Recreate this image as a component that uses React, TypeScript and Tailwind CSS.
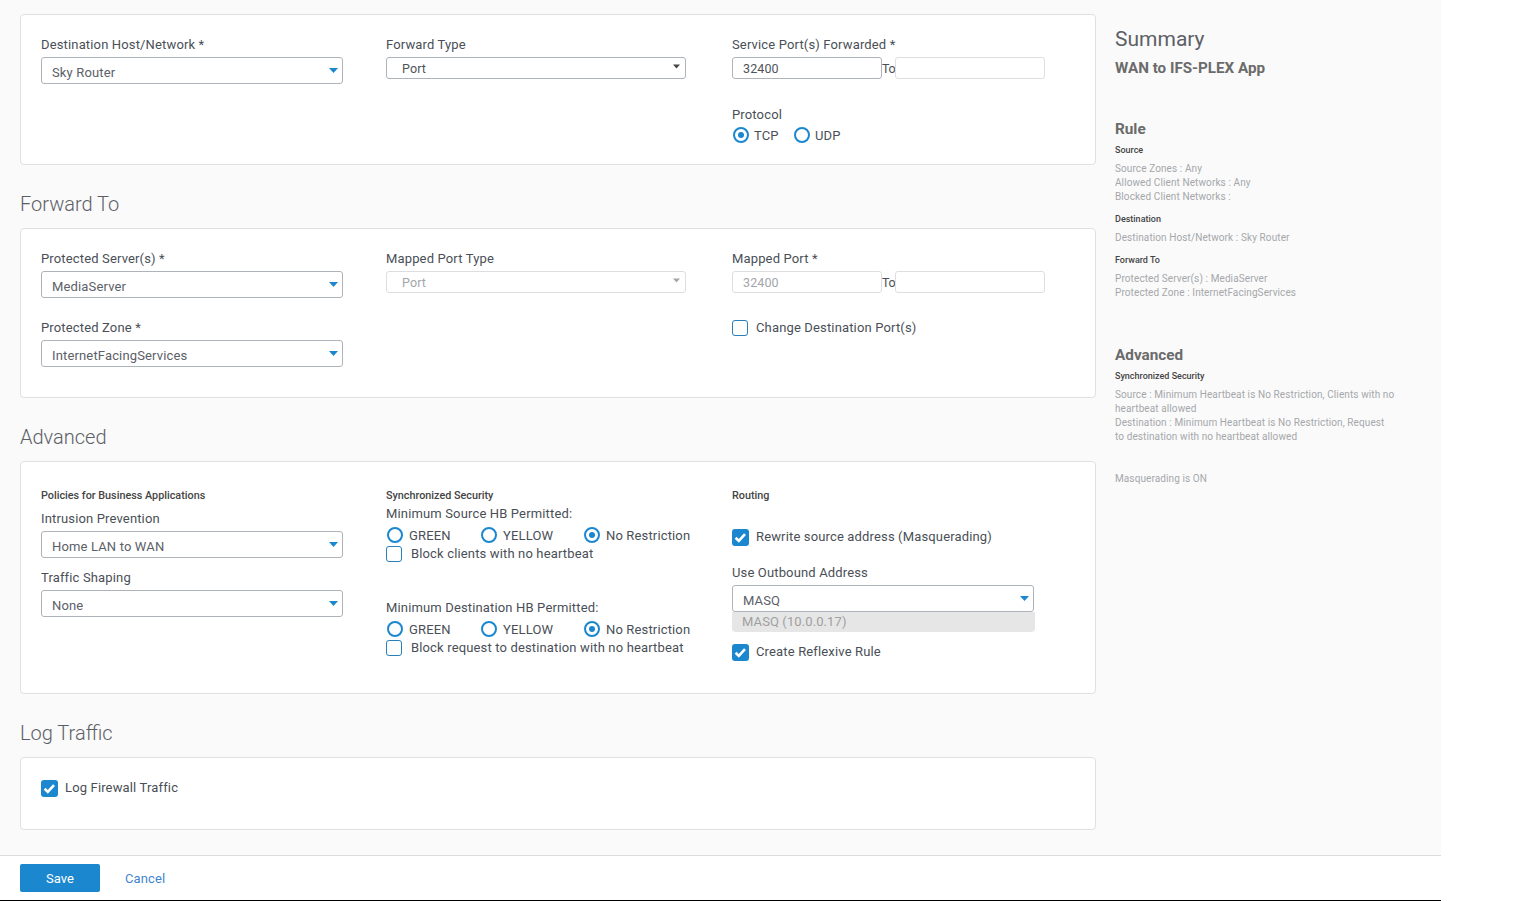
import type { ReactNode } from "react";

const font = "font-['Roboto','Noto_Sans',sans-serif]";
const cols = "grid grid-cols-[345px_346px_1fr]";

function Label({ children, className = "" }: { children: ReactNode; className?: string }) {
  return <div className={`h-[18px] leading-[20px] text-[13px] tracking-[0.15px] text-[#4a4f57] whitespace-nowrap ${className}`}>{children}</div>;
}

function Caret({ color = "#1a87cf", size = 9 }: { color?: string; size?: number }) {
  return (
    <svg width={size} height={5} viewBox="0 0 9 5" className="block">
      <path d="M0 0h9L4.5 5z" fill={color} />
    </svg>
  );
}

function BlueSelect({ value, className = "w-[302px]" }: { value: string; className?: string }) {
  return (
    <div className={`relative h-[27px] ${className} bg-white border border-[#aeb3b9] rounded-[3px] pl-[10px] pt-[6px] leading-[18px] text-[13px] tracking-[0.15px] text-[#5c6068]`}>
      {value}
      <span className="absolute right-[4px] top-[10px]"><Caret /></span>
    </div>
  );
}

function NativeSelect({ value, disabled = false }: { value: string; disabled?: boolean }) {
  return (
    <div className={`relative h-[22px] w-[300px] bg-white border rounded-[3px] pl-[15px] leading-[22px] text-[12.5px] tracking-[0.1px] ${disabled ? "border-[#dcdee1] text-[#a3a6ab]" : "border-[#aeb3b9] text-[#4f535a]"}`}>
      {value}
      <span className="absolute right-[5px] top-[6px]"><Caret color={disabled ? "#a3a6ab" : "#444"} size={7} /></span>
    </div>
  );
}

function PortInputs({ value, disabled = false }: { value: string; disabled?: boolean }) {
  return (
    <div className="flex items-start h-[22px]">
      <div className={`w-[150px] h-[22px] shrink-0 border rounded-[3px] bg-white pl-[10px] leading-[22px] text-[12.5px] tracking-[0.1px] ${disabled ? "border-[#dcdee1] text-[#a3a6ab]" : "border-[#aeb3b9] text-[#4f535a]"}`}>{value}</div>
      <span className="w-[13px] shrink-0 leading-[24px] text-[12.5px] tracking-[-0.4px] text-[#4a4f57]">To</span>
      <div className="w-[150px] h-[22px] shrink-0 border border-[#dcdee1] rounded-[3px] bg-white" />
    </div>
  );
}

function Radio({ label, checked = false, gap = "ml-[6px]", className = "" }: { label: string; checked?: boolean; gap?: string; className?: string }) {
  return (
    <div className={`flex items-center h-[18px] ${className}`}>
      <span className="w-[16px] h-[16px] mb-[2px] rounded-full border-[2.5px] border-[#1a87cf] bg-white flex items-center justify-center shrink-0">
        {checked && <span className="w-[6px] h-[6px] rounded-full bg-[#1a87cf]" />}
      </span>
      <span className={`${gap} text-[13px] tracking-[0.15px] text-[#4a4f57] whitespace-nowrap`}>{label}</span>
    </div>
  );
}

function Check({ label, checked = false, gap = "ml-[8px]", className = "" }: { label: string; checked?: boolean; gap?: string; className?: string }) {
  return (
    <div className={`flex items-center h-[18px] ${className}`}>
      {checked ? (
        <span className="w-[17px] h-[17px] rounded-[3px] bg-[#1a87cf] flex items-center justify-center shrink-0">
          <svg width="13" height="13" viewBox="0 0 13 13"><path d="M1.6 6.8l3.2 3.1 6.2-6.7" fill="none" stroke="#fff" strokeWidth="2.6" /></svg>
        </span>
      ) : (
        <span className="w-[16px] h-[16px] rounded-[3px] border-[1.5px] border-[#2a7fb8] bg-white shrink-0" />
      )}
      <span className={`${gap} text-[13px] tracking-[0.15px] text-[#4a4f57] whitespace-nowrap`}>{label}</span>
    </div>
  );
}

function Card({ className, children }: { className: string; children: ReactNode }) {
  return <div className={`bg-white border border-[#dfe0e2] rounded-[4px] ${className}`}>{children}</div>;
}

function Heading({ children }: { children: ReactNode }) {
  return <div className="h-[63px] pt-[26px] leading-[26px] text-[20px] font-light text-[#5c6066]">{children}</div>;
}

function SmallHead({ children }: { children: ReactNode }) {
  return <div className="h-[14px] leading-[16px] text-[10.8px] font-medium text-[#444] whitespace-nowrap">{children}</div>;
}

function HbGroup({ title, check }: { title: string; check: string }) {
  return (
    <div>
      <Label>{title}</Label>
      <div className="flex mt-[5px]">
        <Radio label="GREEN" className="w-[95px] pl-[1px]" />
        <Radio label="YELLOW" className="w-[103px]" />
        <Radio label="No Restriction" checked />
      </div>
      <Check label={check} gap="ml-[9px]" />
    </div>
  );
}

function SideHead({ children, className = "" }: { children: ReactNode; className?: string }) {
  return <div className={`leading-[20px] text-[15.3px] font-bold text-[#6b6b6b] ${className}`}>{children}</div>;
}

function SideSub({ children, className = "" }: { children: ReactNode; className?: string }) {
  return <div className={`leading-[12px] text-[9px] font-medium text-[#444] ${className}`}>{children}</div>;
}

function SideText({ children, className = "" }: { children: ReactNode; className?: string }) {
  return <div className={`leading-[14px] text-[10px] tracking-[0.1px] text-[#a5a7aa] ${className}`}>{children}</div>;
}

export default function App() {
  return (
    <div className={`${font} w-[1536px] h-[901px] overflow-hidden bg-white`}>
      <div className="w-[1441px] h-[901px] flex flex-col border-b border-black">
        <div className="h-[855px] shrink-0 bg-[#fafafa] flex">
          <div className="w-[1096px] pl-[20px] pt-[14px] shrink-0">
            <Card className={`h-[151px] ${cols} pl-[20px] pt-[20px]`}>
              <div>
                <Label>Destination Host/Network *</Label>
                <BlueSelect value="Sky Router" className="w-[302px] mt-[4px]" />
              </div>
              <div>
                <Label>Forward Type</Label>
                <div className="mt-[4px]"><NativeSelect value="Port" /></div>
              </div>
              <div>
                <Label>Service Port(s) Forwarded *</Label>
                <div className="mt-[4px]"><PortInputs value="32400" /></div>
                <Label className="mt-[26px]">Protocol</Label>
                <div className="flex mt-[4px] pl-[1px]">
                  <Radio label="TCP" checked gap="ml-[5px]" className="w-[61px]" />
                  <Radio label="UDP" gap="ml-[5px]" />
                </div>
              </div>
            </Card>

            <Heading>Forward To</Heading>
            <Card className={`h-[170px] ${cols} pl-[20px] pt-[20px]`}>
              <div>
                <Label>Protected Server(s) *</Label>
                <BlueSelect value="MediaServer" className="w-[302px] mt-[4px]" />
                <Label className="mt-[20px]">Protected Zone *</Label>
                <BlueSelect value="InternetFacingServices" className="w-[302px] mt-[4px]" />
              </div>
              <div>
                <Label>Mapped Port Type</Label>
                <div className="mt-[4px]"><NativeSelect value="Port" disabled /></div>
              </div>
              <div>
                <Label>Mapped Port *</Label>
                <div className="mt-[4px]"><PortInputs value="32400" disabled /></div>
                <Check label="Change Destination Port(s)" className="mt-[26px]" />
              </div>
            </Card>

            <Heading>Advanced</Heading>
            <Card className={`h-[233px] ${cols} pl-[20px] pt-[26px]`}>
              <div>
                <SmallHead>Policies for Business Applications</SmallHead>
                <Label className="mt-[7px]">Intrusion Prevention</Label>
                <BlueSelect value="Home LAN to WAN" className="w-[302px] mt-[4px]" />
                <Label className="mt-[10px]">Traffic Shaping</Label>
                <BlueSelect value="None" className="w-[302px] mt-[4px]" />
              </div>
              <div>
                <SmallHead>Synchronized Security</SmallHead>
                <div className="mt-[2px]">
                  <HbGroup title="Minimum Source HB Permitted:" check="Block clients with no heartbeat" />
                </div>
                <div className="mt-[35px]">
                  <HbGroup title="Minimum Destination HB Permitted:" check="Block request to destination with no heartbeat" />
                </div>
              </div>
              <div>
                <SmallHead>Routing</SmallHead>
                <Check label="Rewrite source address (Masquerading)" checked gap="ml-[7px]" className="mt-[26px]" />
                <Label className="mt-[17px]">Use Outbound Address</Label>
                <BlueSelect value="MASQ" className="w-[302px] mt-[4px]" />
                <div className="w-[303px] h-[20px] bg-[#e6e6e6] rounded-b-[4px] pl-[10px] leading-[19px] text-[13px] tracking-[0.1px] text-[#a0a0a0]">MASQ (10.0.0.17)</div>
                <Check label="Create Reflexive Rule" checked gap="ml-[7px]" className="mt-[11px]" />
              </div>
            </Card>

            <Heading>Log Traffic</Heading>
            <Card className="h-[73px] pl-[20px] pt-[21px]">
              <Check label="Log Firewall Traffic" checked gap="ml-[7px]" />
            </Card>
          </div>

          <div className="pl-[19px] pt-[25px] flex-1">
            <div className="leading-[28px] text-[21px] text-[#5c6066]">Summary</div>
            <div className="mt-[5px] leading-[20px] text-[15.2px] font-bold text-[#6b6b6b] whitespace-nowrap">WAN to IFS-PLEX App</div>
            <SideHead className="mt-[41px]">Rule</SideHead>
            <SideSub className="mt-[5px]">Source</SideSub>
            <div className="mt-[6px]">
              <SideText>Source Zones : Any</SideText>
              <SideText>Allowed Client Networks : Any</SideText>
              <SideText>Blocked Client Networks :</SideText>
            </div>
            <SideSub className="mt-[9px]">Destination</SideSub>
            <SideText className="mt-[6px]">Destination Host/Network : Sky Router</SideText>
            <SideSub className="mt-[9px]">Forward To</SideSub>
            <div className="mt-[6px]">
              <SideText>Protected Server(s) : MediaServer</SideText>
              <SideText>Protected Zone : InternetFacingServices</SideText>
            </div>
            <SideHead className="mt-[45px]">Advanced</SideHead>
            <SideSub className="mt-[5px]">Synchronized Security</SideSub>
            <div className="mt-[6px] w-[280px]">
              <SideText>Source : Minimum Heartbeat is No Restriction, Clients with no heartbeat allowed</SideText>
              <SideText>Destination : Minimum Heartbeat is No Restriction, Request to destination with no heartbeat allowed</SideText>
            </div>
            <SideText className="mt-[28px]">Masquerading is ON</SideText>
          </div>
        </div>

        <div className="flex-1 border-t border-[#dcdcdc] bg-white flex items-start pl-[20px] pt-[8px]">
          <div className="w-[80px] h-[28px] rounded-[2px] bg-[#1a87cf] text-white text-[13px] leading-[29px] text-center">Save</div>
          <div className="ml-[25px] leading-[29px] text-[13px] tracking-[0.1px] text-[#3f86d0]">Cancel</div>
        </div>
      </div>
    </div>
  );
}
